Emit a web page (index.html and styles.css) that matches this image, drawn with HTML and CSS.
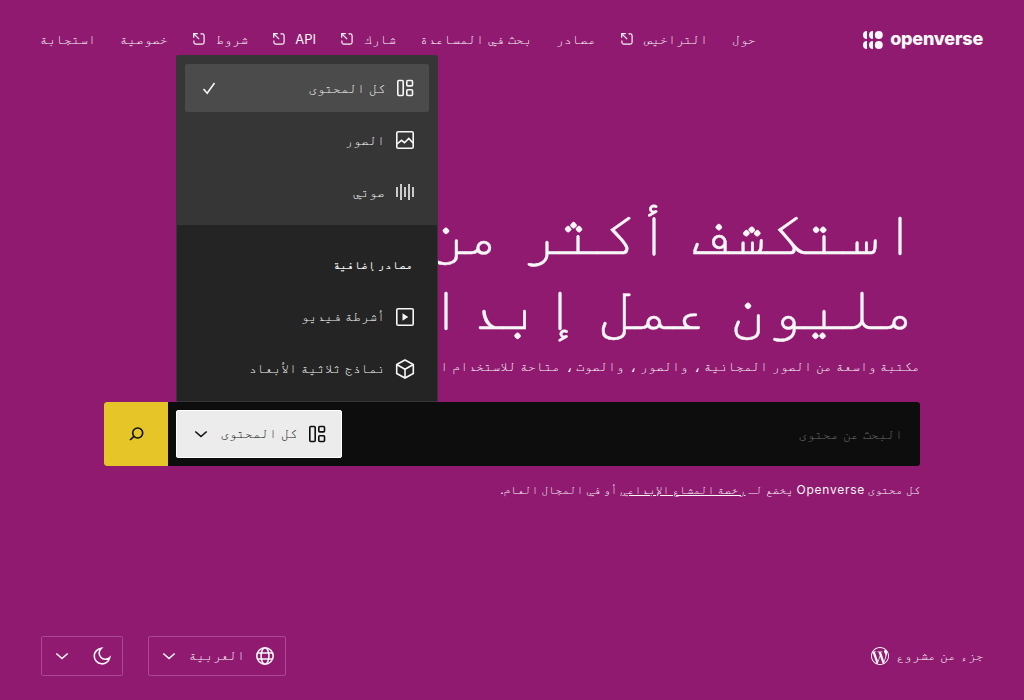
FILE: index.html
```html
<!DOCTYPE html>
<html lang="ar" dir="rtl">
<head>
<meta charset="utf-8">
<title>Openverse</title>
<link rel="stylesheet" href="styles.css">
</head>
<body>
<svg class="defs" width="0" height="0">
  <symbol id="ext" viewBox="0 0 12 12"><path d="M7.500 .9h1.800a1.800 1.800 0 0 1 1.800 1.800v6.600a1.800 1.800 0 0 1-1.800 1.800H2.700A1.800 1.800 0 0 1 .9 9.300V7.500M.7 4.800V.7H4.800M.8 .8l5.400 5.400"/></symbol>
  <symbol id="all" viewBox="0 0 24 24"><rect x="4.800" y="4.500" width="5.400" height="15" rx="1"/><rect x="13.800" y="4.500" width="5.700" height="5.400" rx="1"/><rect x="13.800" y="13.800" width="5.700" height="5.700" rx="1"/></symbol>
  <symbol id="chev" viewBox="0 0 24 24"><path d="M6.300 9.500l5.700 5 5.700-5"/></symbol>
</svg>
<div class="page">
  <header class="header">
    <a class="logo">
      <svg class="mark" viewBox="0 0 20 18"><circle cx="15.800" cy="4" r="4"/><circle cx="15.800" cy="14" r="4"/><path d="M10 0a4 4 0 0 0 0 8zM10 10a4 4 0 0 0 0 8zM4 0a4 4 0 0 0 0 8zM4 10a4 4 0 0 0 0 8z"/></svg>
      <span class="wordmark">openverse</span>
    </a>
    <nav class="nav">
      <a>حول</a>
      <a>التراخيص<svg class="ext"><use href="#ext"/></svg></a>
      <a>مصادر</a>
      <a>بحث في المساعدة</a>
      <a>شارك<svg class="ext"><use href="#ext"/></svg></a>
      <a><span class="api">API</span><svg class="ext"><use href="#ext"/></svg></a>
      <a>شروط<svg class="ext"><use href="#ext"/></svg></a>
      <a>خصوصية</a>
      <a>استجابة</a>
    </nav>
  </header>
  <main class="main">
    <h1 class="title">استكشف أكثر من 800 مليون عمل إبداعي</h1>
    <p class="lead">مكتبة واسعة من الصور المجانية ، والصور ، والصوت ، متاحة للاستخدام المجاني.</p>
    <div class="search">
      <span class="placeholder">البحث عن محتوى</span>
      <div class="picker">
        <button class="type"><svg class="icon"><use href="#all"/></svg><span>كل المحتوى</span><svg class="icon chev"><use href="#chev"/></svg></button>
        <div class="menu">
          <ul class="group">
            <li class="item selected"><svg class="icon"><use href="#all"/></svg><span>كل المحتوى</span>
              <svg class="icon check" viewBox="0 0 24 24"><path d="M6.500 13l3.700 4.200L17.500 7"/></svg></li>
            <li class="item"><svg class="icon" viewBox="0 0 24 24"><rect x="3.800" y="3.800" width="16.400" height="16.400" rx="1.300"/><path d="M4 16l4.500-3.700 3 2.400 4.300-4.200L20 15"/></svg><span>الصور</span></li>
            <li class="item"><svg class="icon wave" viewBox="0 0 24 24"><path d="M4 7v10M8 4v16M12 7v10M16 4v16M20 7v10"/></svg><span>صوتي</span></li>
          </ul>
          <div class="group extra">
            <h2 class="subhead">مصادر إضافية</h2>
            <div class="item"><svg class="icon" viewBox="0 0 24 24"><rect x="3.800" y="3.800" width="16.400" height="16.400" rx="1.300"/><path class="solid" d="M10.300 9.700v4.600l3.500-2.300z"/></svg><span>أشرطة فيديو</span></div>
            <div class="item"><svg class="icon" viewBox="0 0 24 24"><path d="M12 3l8.300 4.500v9L12 21l-8.300-4.500v-9zM3.700 7.500L12 12.300l8.300-4.800M12 12.300V21"/></svg><span>نماذج ثلاثية الأبعاد</span></div>
          </div>
        </div>
      </div>
      <button class="go"><svg class="icon" viewBox="0 0 24 24"><circle cx="13.700" cy="11" r="5"/><path d="M10 14.400L6 18"/></svg></button>
    </div>
    <p class="license">كل محتوى <span class="latin">Openverse</span> يخضع لـ <a>رخصة المشاع الإبداعي</a> أو في المجال العام.</p>
  </main>
  <footer class="footer">
    <div class="project"><span>جزء من مشروع</span>
      <svg class="wp" viewBox="0 0 24 24"><path d="M21.469 6.825c.84 1.537 1.318 3.300 1.318 5.175 0 3.979-2.156 7.456-5.363 9.325l3.295-9.527c.615-1.540.82-2.771.82-3.864 0-.405-.026-.78-.070-1.110m-7.981.105c.647-.030 1.232-.105 1.232-.105.582-.075.514-.930-.067-.899 0 0-1.755.135-2.880.135-1.064 0-2.850-.150-2.850-.150-.585-.030-.661.855-.075.885 0 0 .540.061 1.125.090l1.680 4.605-2.370 7.080L5.354 6.900c.649-.030 1.234-.100 1.234-.100.585-.075.516-.930-.065-.896 0 0-1.746.138-2.874.138-.200 0-.438-.008-.690-.015C4.911 3.150 8.235 1.215 12 1.215c2.809 0 5.365 1.072 7.286 2.833-.046-.003-.091-.009-.141-.009-1.060 0-1.812.923-1.812 1.914 0 .890.513 1.643 1.060 2.531.411.720.890 1.643.890 2.977 0 .915-.354 1.994-.821 3.479l-1.075 3.585-3.900-11.610.001.015zM12 22.784c-1.059 0-2.081-.153-3.048-.437l3.237-9.406 3.315 9.087c.024.053.050.101.078.149-1.120.393-2.325.607-3.582.607M1.211 12c0-1.564.336-3.050.935-4.390L7.290 21.709C3.694 19.960 1.212 16.271 1.211 12M12 0C5.385 0 0 5.385 0 12s5.385 12 12 12 12-5.385 12-12S18.615 0 12 0"/></svg>
    </div>
    <div class="controls">
      <button class="select lang"><svg class="icon" viewBox="0 0 24 24"><circle cx="12" cy="12" r="8.200"/><ellipse cx="12" cy="12" rx="3.900" ry="8.200"/><path d="M4.500 9h15M4.500 15h15"/></svg><span>العربية</span><svg class="icon chev"><use href="#chev"/></svg></button>
      <button class="select theme"><svg class="icon" viewBox="0 0 24 24"><path d="M11.200 4.300a7.800 7.800 0 1 0 8.500 9.300 6.200 6.200 0 0 1-8.500-9.300z"/></svg><svg class="icon chev"><use href="#chev"/></svg></button>
    </div>
  </footer>
</div>
</body>
</html>
```
FILE: styles.css
```css
* { box-sizing: border-box; margin: 0; padding: 0; }
body {
  background: #8f1a70;
  color: #f7f7f7;
  font: 13.333px/17px Inter, FreeMono, sans-serif;
  word-spacing: 0.25px;
}
button { font: inherit; word-spacing: inherit; color: inherit; border: 0; background: none; }
ul { list-style: none; }
svg { fill: none; stroke: currentColor; flex: none; }
.defs { position: absolute; }
.page { height: 700px; display: flex; flex-direction: column; overflow: hidden; }

.header { height: 80px; padding: 0 41px 2px 40px; display: flex; align-items: center; justify-content: space-between; }
.logo { display: flex; align-items: center; gap: 7px; direction: ltr; padding-top: 2px; }
.mark { width: 20px; height: 18px; fill: currentColor; stroke: none; }
.wordmark { font-size: 18px; font-weight: 800; letter-spacing: -0.22px; line-height: 20px; margin-top: -3px; }
.nav { display: flex; gap: 24px; }
.nav a { display: flex; align-items: center; gap: 11px; white-space: nowrap; }
.api { font-size: 13px; width: 20px; }
.ext { width: 12px; height: 12px; stroke-width: 1.2; margin-left: 1px; }

.main { width: 816px; margin: 0 auto; padding-top: 114px; flex: 1; }
.title { font-size: 63.333px; font-weight: 400; line-height: 75px; padding-right: 1px; -webkit-text-stroke: 0.4px currentColor; }
.lead { line-height: 20px; margin-top: 12px; white-space: nowrap; }
.search { margin-top: 26px; height: 64px; display: flex; align-items: center; background: #0d0d0d; border-radius: 3px; }
.placeholder { flex: 1; padding-right: 17px; color: #6c6c6c; }
.picker { position: relative; margin-left: 8px; }
.type { width: 166px; height: 48px; padding: 0 12px; display: flex; align-items: center; background: #ececec; border: 1px solid #fff; border-radius: 2px; color: #0d0d0d; white-space: nowrap; }
.type span { margin: 0 8px 2px auto; }
.icon { width: 24px; height: 24px; stroke-width: 1.6; }
.go { width: 64px; height: 64px; display: flex; align-items: center; justify-content: center; background: #e5c528; color: #0d0d0d; border-radius: 3px 0 0 3px; }

.menu { position: absolute; left: 0; bottom: 56px; width: 262px; height: 347px; background: #363636; border: 1px solid #363636; border-radius: 2px; }
.group { padding: 8px; height: 169px; display: flex; flex-direction: column; gap: 4px; }
.extra { height: 176px; background: #242424; padding-top: 16px; }
.item { height: 48px; padding: 0 12px; display: flex; align-items: center; gap: 8px; border-radius: 2px; }
.extra .item span { padding-bottom: 1px; }
.selected { background: #4b4b4b; }
.wave { stroke-width: 2; color: #ccc; }
.check { margin-right: auto; }
.solid { fill: currentColor; }
.subhead { height: 48px; line-height: 48px; padding: 0 16px; font-size: 11.667px; font-weight: 700; }

.license { margin-top: 15px; font-size: 11.667px; line-height: 17px; word-spacing: -0.27px; }
.license a { text-decoration: underline; }
.latin { font-size: 12px; letter-spacing: 0.75px; }

.footer { height: 64px; padding: 0 40px 24px 41px; display: flex; justify-content: space-between; align-items: center; }
.project { display: flex; align-items: center; gap: 7px; }
.project span, .lang span { padding-bottom: 1px; }
.wp { width: 18px; height: 18px; fill: currentColor; stroke: none; }
.controls { display: flex; gap: 25px; }
.select { height: 40px; display: flex; align-items: center; border: 1px solid #aa4a93; border-radius: 2px; padding: 0 8px; }
.lang { width: 138px; }
.theme { width: 82px; justify-content: space-between; }
.lang span { margin-left: auto; margin-right: 8px; }
```
